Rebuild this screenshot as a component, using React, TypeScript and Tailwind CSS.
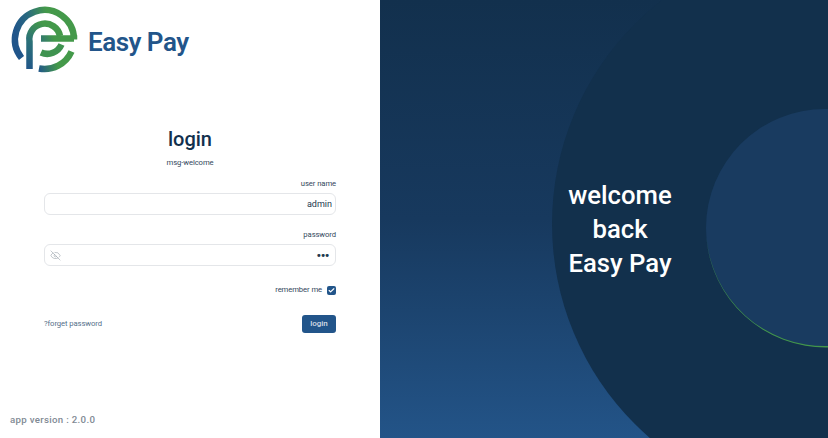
import { Check, EyeOff } from "lucide-react";

const din = "font-['Roboto',sans-serif]";

function Logo() {
  return (
    <svg width="80" height="80" viewBox="0 0 80 80" className="shrink-0">
      <defs>
        <linearGradient id="logoGrad" gradientUnits="userSpaceOnUse" x1="18" y1="40" x2="52" y2="30">
          <stop offset="0" stopColor="#20558a" />
          <stop offset="0.45" stopColor="#2a6a80" />
          <stop offset="1" stopColor="#44994a" />
        </linearGradient>
        <linearGradient id="stemGrad" gradientUnits="userSpaceOnUse" x1="25" y1="68" x2="52" y2="30">
          <stop offset="0" stopColor="#20558a" />
          <stop offset="0.55" stopColor="#2c7277" />
          <stop offset="1" stopColor="#44994a" />
        </linearGradient>
        <linearGradient id="lowGrad" gradientUnits="userSpaceOnUse" x1="38" y1="70" x2="58" y2="66">
          <stop offset="0" stopColor="#20558a" />
          <stop offset="1" stopColor="#44994a" />
        </linearGradient>
      </defs>
      <g fill="none" strokeWidth="6.5">
        <path d="M21.5 58A29.5 29.5 0 1 1 74 39.5V38.5H41" stroke="url(#logoGrad)" />
        <path d="M71.5 51.5A29.5 29.5 0 0 1 39 68.5" stroke="url(#lowGrad)" />
        <path d="M29.5 69V41.5A15.5 15.5 0 0 1 60 36" stroke="url(#stemGrad)" />
        <path d="M61.5 44.5A15.5 15.5 0 0 1 41 52.5" stroke="#3f9350" />
      </g>
    </svg>
  );
}

function Field({ label, value, eye }: { label: string; value: string; eye?: boolean }) {
  return (
    <div className="flex flex-col">
      <label className="mb-[3px] text-right text-[7.7px] leading-[12px] tracking-[-0.1px] text-[#33485c]">{label}</label>
      <div className={`flex h-[22px] items-center justify-between rounded-[6px] border border-[#e4e6e9] bg-white pl-[5px] ${eye ? "pr-[6px]" : "pr-[3px]"}`}>
        {eye ? <EyeOff size={11} strokeWidth={1} className="text-[#7d8893]" /> : <span />}
        <span className={`leading-none text-[#23384d] ${eye ? "text-[13px] font-bold tracking-[-0.5px]" : "text-[9px]"}`}>{value}</span>
      </div>
    </div>
  );
}

export default function App() {
  return (
    <div className={`flex h-[438px] w-[828px] overflow-hidden bg-white ${din}`}>
      <div className="flex w-[380px] shrink-0 flex-col">
        <div className="flex h-[80px] items-center">
          <Logo />
          <span className="ml-[8px] mt-[3px] text-[26px] font-semibold leading-none tracking-[-0.5px] text-[#22558a]">Easy Pay</span>
        </div>
        <div className="flex flex-1 flex-col px-[44px] pt-[47px]">
          <h1 className="text-center text-[20px] font-medium leading-[24px] text-[#12304d]">login</h1>
          <p className="mt-[6px] text-center text-[7.7px] leading-[12px] tracking-[-0.1px] text-[#33485c]">msg-welcome</p>
          <div className="mt-[9px]">
            <Field label="user name" value="admin" />
          </div>
          <div className="mt-[14px]">
            <Field label="password" value="•••" eye />
          </div>
          <div className="mt-[18px] flex items-center justify-end gap-[5px]">
            <span className="text-[7.7px] leading-[12px] tracking-[-0.1px] text-[#33485c]">remember me</span>
            <span className="flex h-[9px] w-[9px] items-center justify-center rounded-[2px] bg-[#22558a]">
              <Check size={7} strokeWidth={4} className="text-white" />
            </span>
          </div>
          <div className="mt-[19px] flex items-center justify-between">
            <a className="text-[7.7px] leading-[12px] tracking-[-0.1px] text-[#55708a]">?forget password</a>
            <button className="flex h-[18px] w-[34px] items-center justify-center rounded-[3px] bg-[#22558a] text-[8px] font-medium leading-none text-[#d5dde6]">
              login
            </button>
          </div>
          <div className="mt-auto mb-[11px] -ml-[34px] text-[9.7px] font-medium leading-[14px] tracking-[0.3px] text-[#7f8a94]">app version : 2.0.0</div>
        </div>
      </div>
      <div className="relative flex-1 overflow-hidden bg-gradient-to-b from-[#12304d] via-[#17395e] to-[#235488]">
        <div className="absolute left-[172px] top-[-59px] h-[566px] w-[566px] rounded-full bg-[#12304c]" />
        <div className="absolute left-[326px] top-[109px] h-[238px] w-[238px] rounded-full bg-[#193b60]" />
        <svg className="absolute left-0 top-0" width="448" height="438" viewBox="0 0 448 438" fill="#43964a">
          <path d="M326.3 236A119.4 119.4 0 0 0 448 347.4V346A118.8 118.8 0 0 1 326.3 236Z" />
        </svg>
        <div className="absolute left-[172px] top-[178px] flex w-[136px] flex-col items-center text-[25.7px] font-medium leading-[34px] text-white">
          <span>welcome</span>
          <span>back</span>
          <span>Easy Pay</span>
        </div>
      </div>
    </div>
  );
}
